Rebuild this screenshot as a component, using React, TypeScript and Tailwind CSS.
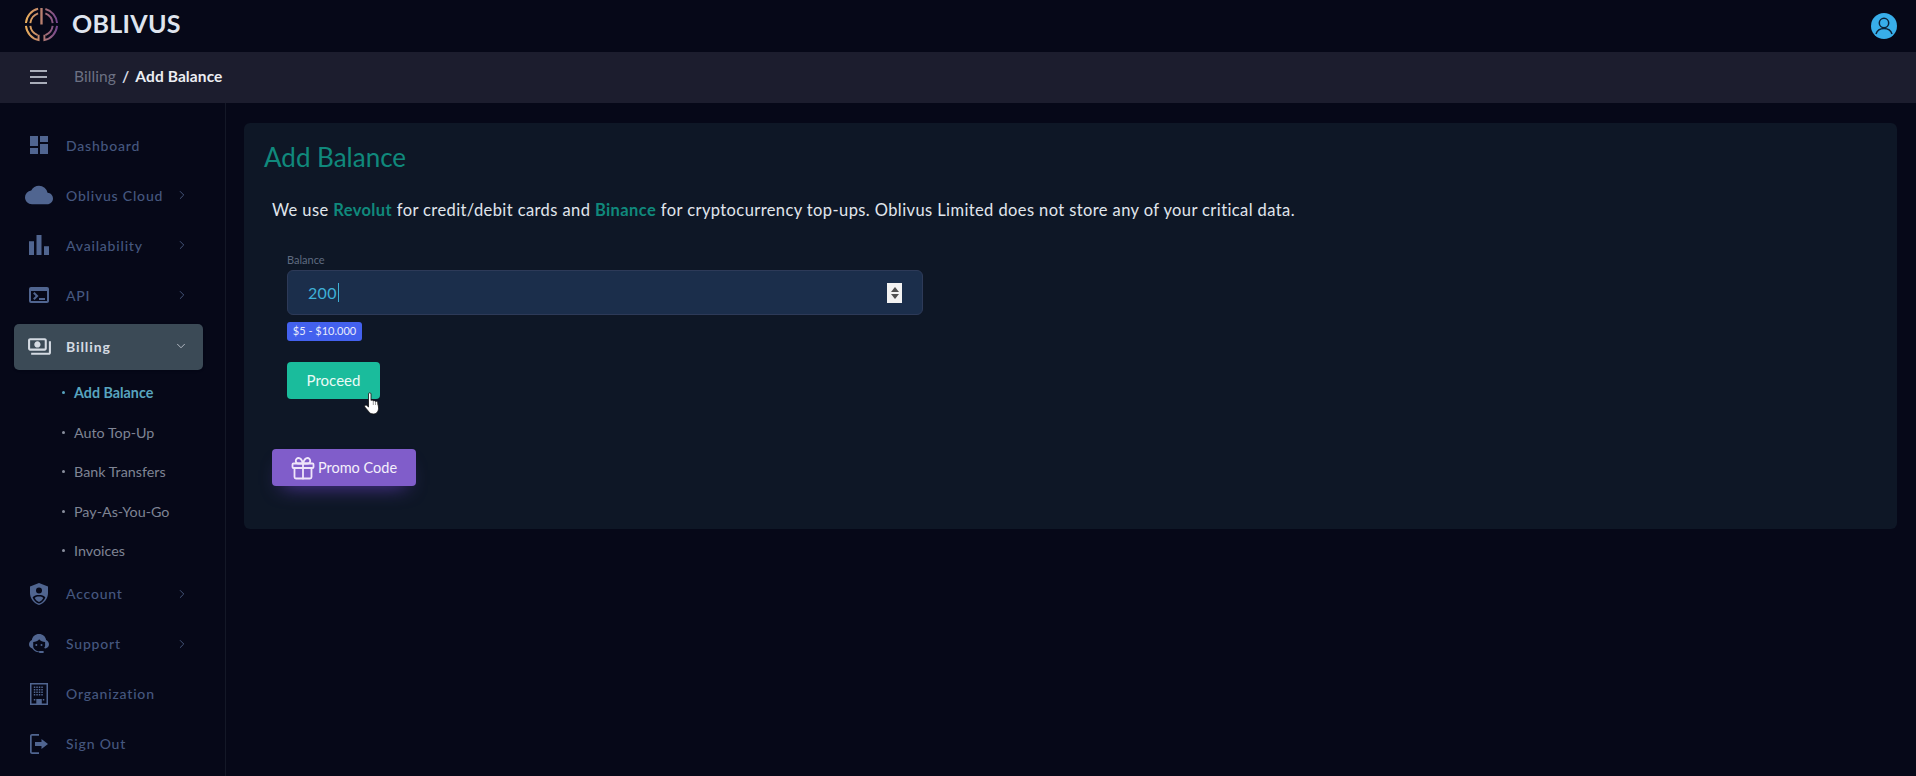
import type { ReactNode } from 'react'
import { ChevronRight, ChevronDown } from 'lucide-react'
import {
  MdDashboard,
  MdCloud,
  MdBarChart,
  MdTerminal,
  MdOutlinePayments,
} from 'react-icons/md'

function ShieldIcon() {
  return (
    <svg viewBox="0 0 18 22" className="h-[22px] w-[18px]" fill="currentColor">
      <path d="M9 0 0 3.500V10c0 5.500 3.800 10.500 9 12 5.200-1.500 9-6.500 9-12V3.500L9 0Z" />
      <circle cx="9" cy="7.500" r="3" fill="#060818" />
      <path d="M2.600 14.500C4 12.500 6.300 12 9 12s5 .5 6.400 2.500C14.200 17.500 12 19.700 9 20.600c-3-.9-5.200-3.100-6.400-6.100Z" fill="#060818" />
      <path d="M4.700 14.900c1-.9 2.500-1.300 4.300-1.300s3.300.4 4.300 1.300c-.9 1.900-2.400 3.300-4.300 4-1.900-.7-3.400-2.100-4.300-4Z" />
    </svg>
  )
}

function AgentIcon() {
  return (
    <svg viewBox="0 0 20 19" className="h-[19px] w-[20px]" fill="currentColor">
      <path d="M10 0C6.300 0 3.300 2.600 2.900 6 1.200 6.800 0 8.400 0 10.300c0 2 1.400 3.700 3.300 4.200C4.800 16.700 7.100 18.100 9.800 18.300c.2.400.6.700 1.100.7h2.800c.7 0 1.100-.4 1.100-1s-.4-1-1.100-1h-2.800c-.4 0-.7.100-.9.400-2.700-.2-5-2-5.800-4.400V8c2.300-.1 4.600-1.100 6-2.800C11.600 6.900 13.800 8 16.100 8v4c-.2.700-.5 1.400-1 2.100l1.600.4c1.900-.5 3.300-2.200 3.300-4.200 0-1.900-1.200-3.500-2.900-4.300C16.700 2.600 13.700 0 10 0Z" />
      <rect x="6.300" y="10" width="2" height="2" rx="1" />
      <rect x="11.500" y="10" width="2" height="2" rx="1" />
    </svg>
  )
}

function BuildingIcon() {
  const dots = []
  for (let y = 3.500; y <= 13; y += 2.500) {
    for (let x = 3.800; x <= 13; x += 2.500) {
      dots.push(<rect key={`${x}-${y}`} x={x} y={y} width="1.500" height="1.500" />)
    }
  }
  return (
    <svg viewBox="0 0 18 22" className="h-[22px] w-[18px]" fill="currentColor">
      <path fillRule="evenodd" d="M0 0h18v22H0V0Zm1.500 1.500v19h15v-19h-15Z" />
      {dots}
      <rect x="6.300" y="16" width="5.500" height="5" />
      <rect x="3.800" y="16" width="1.500" height="1.500" />
      <rect x="12.800" y="16" width="1.500" height="1.500" />
    </svg>
  )
}

function SignOutIcon() {
  return (
    <svg viewBox="0 0 18 20" className="h-[20px] w-[18px]" fill="currentColor">
      <path d="M2 0h7v1.700H2c-.2 0-.3.100-.3.300v16c0 .2.100.3.300.3h7V20H2c-1 0-2-.9-2-2V2C0 .9 1 0 2 0Z" />
      <path d="M11.500 5 18 10l-6.500 5v-3H5V8h6.500V5Z" />
    </svg>
  )
}

function Logo() {
  return (
    <svg viewBox="0 0 36 36" className="h-[35px] w-[35px]" fill="none" strokeWidth="2">
      <defs>
        <linearGradient id="logoGrad" gradientUnits="userSpaceOnUse" x1="0" y1="0" x2="36" y2="0">
          <stop offset="0" stopColor="#f0b45a" />
          <stop offset="0.5" stopColor="#b9806f" />
          <stop offset="1" stopColor="#6d3f92" />
        </linearGradient>
      </defs>
      <g stroke="url(#logoGrad)">
        <path d="M14.500 1.800A16.500 16.500 0 0 0 2 16.500" />
        <path d="M2 19.500A16.500 16.500 0 0 0 15 34V28.500" />
        <path d="M14.500 6.500A12 12 0 0 0 6.500 16.500" />
        <path d="M6.500 19.500A12 12 0 0 0 14 29" />
        <path d="M22 2A16.500 16.500 0 0 1 34 16.500" />
        <path d="M34 19.500A16.500 16.500 0 0 1 21 34V28.500" />
        <path d="M22 6.500A12 12 0 0 1 29.500 16.500" />
        <path d="M29.500 19.500A12 12 0 0 1 22 29" />
        <path d="M18 1v17" strokeWidth="2.400" />
      </g>
    </svg>
  )
}

function UserAvatar() {
  return (
    <svg viewBox="0 0 26 26" className="h-[26px] w-[26px]">
      <circle cx="13" cy="13" r="13" fill="#38aeea" />
      <circle cx="13" cy="10" r="4.700" fill="none" stroke="#0c2238" strokeWidth="1.500" />
      <path d="M5 21c1.200-4 4-5.500 8-5.500s6.800 1.500 8 5.500" fill="none" stroke="#0c2238" strokeWidth="1.500" />
    </svg>
  )
}

function GiftIcon() {
  return (
    <svg viewBox="0 0 24 24" className="h-[24px] w-[24px]" fill="none" stroke="#efe6fa" strokeWidth="1.800" strokeLinecap="round" strokeLinejoin="round">
      <rect x="1.500" y="7.500" width="21" height="4.500" rx="1" />
      <path d="M3.500 12v9a1.500 1.500 0 0 0 1.500 1.500h14a1.500 1.500 0 0 0 1.500-1.500v-9" />
      <path d="M12 7.500v15" />
      <path d="M12 7.500H7.500a2.700 2.700 0 0 1 0-5.500C10.500 2 12 7.500 12 7.500Z" />
      <path d="M12 7.500h4.500a2.700 2.700 0 0 0 0-5.500C13.500 2 12 7.500 12 7.500Z" />
    </svg>
  )
}

function HandCursor() {
  return (
    <svg viewBox="0 0 17 24" className="absolute left-[364px] top-[391px] h-[24px] w-[17px]">
      <path
        d="M4.500 3C4.500 1.300 7 1.300 7 3v6.500c.7-.6 1.900-.5 2.300.4.700-.5 1.900-.3 2.200.6.800-.5 2-.1 2.200.9l.8 4.600c.4 3.500-1.400 7-4.800 7-2.800 0-4.200-1-5.300-2.800L.8 16c-.8-1.200.8-2.700 2-1.600l1.700 1.600V3Z"
        fill="#fff"
        stroke="#111"
        strokeWidth="0.800"
      />
      <path d="M9.300 10v4M11.500 10.500v3.500M13.700 11.500v2.500" stroke="#555" strokeWidth="0.600" fill="none" />
    </svg>
  )
}

function NavItem({
  icon,
  label,
  arrow,
}: {
  icon: ReactNode
  label: string
  arrow?: boolean
}) {
  return (
    <div className="flex h-[50px] items-center text-[#45577f]">
      <div className="flex w-[66px] shrink-0 justify-center pl-[18px] pr-[6px] text-[#506590]">{icon}</div>
      <span className="flex-1 text-[14px] font-medium tracking-[0.8px]">{label}</span>
      {arrow && <ChevronRight className="mr-[36px] h-[14px] w-[14px] text-[#4c5e85]" strokeWidth={1.5} />}
    </div>
  )
}

function SubItem({ label, active }: { label: string; active?: boolean }) {
  return (
    <div className={`flex h-[39.500px] items-center pl-[62px] text-[14.300px] ${active ? 'font-bold text-[#58a4bf]' : 'text-[#7f8494]'}`}>
      <span className={`mr-[9px] h-[3px] w-[3px] rounded-full ${active ? 'bg-[#58a4bf]' : 'bg-[#8a8f9e]'}`} />
      {label}
    </div>
  )
}

export default function App() {
  return (
    <div className="relative flex h-[776px] w-[1916px] flex-col overflow-hidden bg-[#060818] font-['Lato','Noto_Sans',sans-serif]">
      <header className="flex h-[52px] items-center justify-between pl-[24px] pr-[19px]">
        <div className="flex items-center gap-[13px] pb-[4px]">
          <Logo />
          <span className="text-[25px] font-bold tracking-[0.3px] text-[#dfe4ee]">OBLIVUS</span>
        </div>
        <div className="pb-[1px]">
          <UserAvatar />
        </div>
      </header>

      <div className="flex h-[51px] items-center bg-[#1c1d2e] pb-[2px] pl-[30px]">
        <div className="flex flex-col gap-[4px]">
          <span className="h-[2px] w-[17px] bg-[#a9adb9]" />
          <span className="h-[2px] w-[17px] bg-[#a9adb9]" />
          <span className="h-[2px] w-[17px] bg-[#a9adb9]" />
        </div>
        <div className="ml-[27px] text-[15.500px] tracking-[0.1px]">
          <span className="text-[#6c7183]">Billing</span>
          <span className="mx-[6px] font-bold text-[#d6dae4]">/</span>
          <span className="font-bold text-[#eceef3]">Add Balance</span>
        </div>
      </div>

      <div className="flex flex-1">
        <aside className="w-[226px] shrink-0 border-r border-[#141827] pt-[17px]">
          <NavItem icon={<MdDashboard size={24} />} label="Dashboard" />
          <NavItem icon={<MdCloud size={28} />} label="Oblivus Cloud" arrow />
          <NavItem icon={<MdBarChart size={30} />} label="Availability" arrow />
          <NavItem icon={<MdTerminal size={24} />} label="API" arrow />
          <div className="ml-[14px] mr-[22px] mt-[4px] flex h-[46px] items-center rounded-[5px] bg-[#3b4a56] pb-[2px] text-[#d4dae2] shadow-sm">
            <div className="flex w-[52px] shrink-0 justify-center pr-[2px]">
              <MdOutlinePayments size={25} />
            </div>
            <span className="flex-1 text-[14px] font-bold tracking-[0.9px]">Billing</span>
            <ChevronDown className="mr-[15px] h-[14px] w-[14px] text-[#c3c9d2]" strokeWidth={1.5} />
          </div>
          <div className="h-[198.500px] pt-[3px]">
            <SubItem label="Add Balance" active />
            <SubItem label="Auto Top-Up" />
            <SubItem label="Bank Transfers" />
            <SubItem label="Pay-As-You-Go" />
            <SubItem label="Invoices" />
          </div>
          <NavItem icon={<ShieldIcon />} label="Account" arrow />
          <NavItem icon={<AgentIcon />} label="Support" arrow />
          <NavItem icon={<BuildingIcon />} label="Organization" />
          <NavItem icon={<SignOutIcon />} label="Sign Out" />
        </aside>

        <main className="flex-1 pl-[18px] pr-[19px] pt-[20px]">
          <section className="h-[406px] rounded-[6px] bg-[#0e1726] pl-[20px] pt-[17px]">
            <h1 className="text-[26px] leading-[34px] text-[#10897c]">Add Balance</h1>
            <p className="ml-[8px] mt-[24px] text-[16.500px] leading-[24px] tracking-[0.4px] text-[#e0e6ed]">
              We use <b className="text-[#10897c]">Revolut</b> for credit/debit cards and{' '}
              <b className="text-[#10897c]">Binance</b> for cryptocurrency top-ups. Oblivus Limited does not store any of your critical data.
            </p>
            <div className="ml-[23px] mt-[31px] w-[636px]">
              <div className="text-[11px] leading-[14px] text-[#5f6b80]">Balance</div>
              <div className="mt-[3px] flex h-[45px] items-center justify-between rounded-[6px] border border-[#2d3a58] bg-[#1b2e4b] pl-[20px] pr-[20px]">
                <div className="flex items-center text-[16px] tracking-[0.3px] text-[#3fb0d6]">
                  200
                  <span className="ml-[1px] h-[19px] w-px bg-[#3fb0d6]" />
                </div>
                <div className="flex h-[20px] w-[15px] flex-col items-center justify-center gap-[2px] bg-[#f2f2f2]">
                  <span className="h-0 w-0 border-x-[4px] border-b-[5px] border-x-transparent border-b-[#505050]" />
                  <span className="h-0 w-0 border-x-[4px] border-t-[5px] border-x-transparent border-t-[#505050]" />
                </div>
              </div>
              <span className="mt-[7px] flex h-[19px] w-[75px] items-center justify-center rounded-[3px] bg-[#4361ee] text-[11px] text-[#e8ebfb]">
                $5 - $10.000
              </span>
              <button className="mt-[21px] block h-[37px] w-[93px] rounded-[4px] bg-[#1abc9c] text-[15px] text-[#eafaf6]">
                Proceed
              </button>
            </div>
            <button className="ml-[8px] mt-[50px] flex h-[37px] w-[144px] items-center justify-center gap-[3px] rounded-[4px] bg-[#805dca] text-[14.500px] text-[#f4f0fb] shadow-[0_10px_20px_-10px_#5a3aa8]">
              <GiftIcon />
              Promo Code
            </button>
          </section>
        </main>
      </div>

      <HandCursor />
    </div>
  )
}
